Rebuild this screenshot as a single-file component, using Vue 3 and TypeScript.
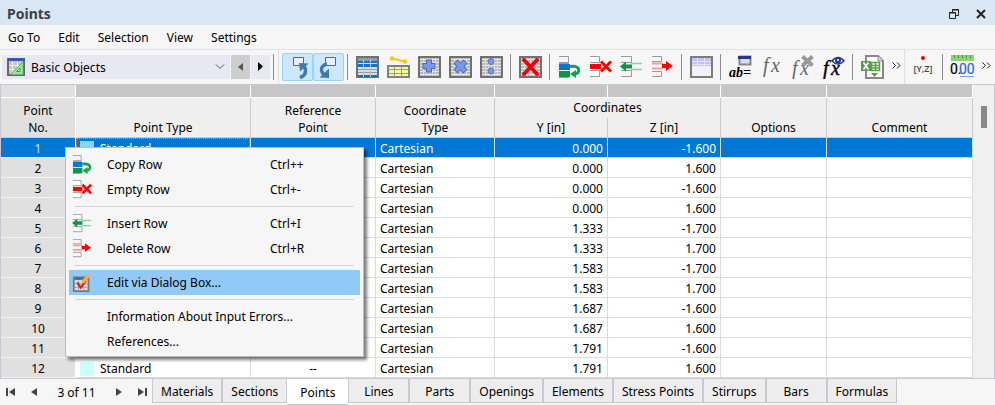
<script setup lang="ts">
import { ref } from 'vue'

interface Tool { icon: string; label: string; on?: boolean }
interface MenuEntry { label: string; keys?: string; icon?: string; active?: boolean }
interface PointRow { no: number; y: string; z: string }

const menus = ['Go To', 'Edit', 'Selection', 'View', 'Settings']

const toolGroups: Tool[][] = [
  [{ icon: 'pick-up', label: 'Select in graphic', on: true }, { icon: 'pick-down', label: 'Show in table', on: true }],
  [
    { icon: 'rows', label: 'Row view' },
    { icon: 'member', label: 'Object view' },
    { icon: 'grid-plus', label: 'Add block' },
    { icon: 'grid-times', label: 'Multiply block' },
    { icon: 'grid-dots', label: 'Divide block' },
  ],
  [{ icon: 'grid-delete', label: 'Clear table' }],
  [
    { icon: 'copy-row', label: 'Copy row' },
    { icon: 'empty-row', label: 'Empty row' },
    { icon: 'insert-row', label: 'Insert row' },
    { icon: 'delete-row', label: 'Delete row' },
  ],
  [{ icon: 'table', label: 'Table settings' }],
  [
    { icon: 'param', label: 'Parameters' },
    { icon: 'fx', label: 'Formula' },
    { icon: 'fx-off', label: 'Remove formula' },
    { icon: 'fx-eye', label: 'Show formulas' },
  ],
  [{ icon: 'excel', label: 'Export' }],
]

const viewGroups: Tool[][] = [
  [{ icon: 'coords', label: 'Coordinates' }],
  [{ icon: 'decimals', label: 'Decimal places' }],
]

const contextMenu: MenuEntry[][] = [
  [{ label: 'Copy Row', keys: 'Ctrl++', icon: 'copy-row' }, { label: 'Empty Row', keys: 'Ctrl+-', icon: 'empty-row' }],
  [{ label: 'Insert Row', keys: 'Ctrl+I', icon: 'insert-row' }, { label: 'Delete Row', keys: 'Ctrl+R', icon: 'delete-row' }],
  [{ label: 'Edit via Dialog Box...', icon: 'dialog', active: true }],
  [{ label: 'Information About Input Errors...' }, { label: 'References...' }],
]

const ys = ['0.000', '1.333', '1.583', '1.687', '1.791']
const rows: PointRow[] = Array.from({ length: 12 }, (_, i) => {
  const y = i < 4 ? ys[0] : ys[Math.floor(i / 2) - 1]
  const depth = i >= 4 && i < 8 ? '1.700' : '1.600'
  return { no: i + 1, y, z: i % 2 === 0 ? '-' + depth : depth }
})

const tabs = ['Materials', 'Sections', 'Points', 'Lines', 'Parts', 'Openings', 'Elements', 'Stress Points', 'Stirrups', 'Bars', 'Formulas']
const activeTab = ref('Points')
const selectedRow = ref(1)
const category = ref('Basic Objects')
</script>

<template>
  <svg class="sprite" aria-hidden="true">
    <defs>
      <symbol id="pick-up" viewBox="0 0 29 26">
        <path d="M10.500 3.500h10v8h-10z" fill="#eee" stroke="#666" />
        <path d="M17 23.500c3-1 5.500-3 5.500-6.500 0-2-.5-3.500-1.500-5" fill="none" stroke="#4078b0" stroke-width="3.500" />
        <path d="M16 9l9.500.5-8.500 8z" fill="#4078b0" />
      </symbol>
      <symbol id="pick-down" viewBox="0 0 29 26">
        <path d="M11.500 3.500h10v8h-10z" fill="#eee" stroke="#666" />
        <path d="M13 10c-4.500 1-6 4-5.500 6.500.3 2 1.500 3.500 3 4.500" fill="none" stroke="#4078b0" stroke-width="3.500" />
        <path d="M15 14.500V24l-9.500-.5z" fill="#4078b0" />
      </symbol>
      <symbol id="grid" viewBox="0 0 23 22">
        <path d="M1 1h21v20H1z" fill="#b8b8b8" stroke="#707070" stroke-width="2" />
        <path d="M2 3.500h19M2 6.500h19M2 9.500h19M2 12.500h19M2 15.500h19M2 18.500h19" stroke="#e8e8e8" />
        <path d="M5.500 2v18M8.500 2v18M11.500 2v18M14.500 2v18M17.500 2v18" stroke="#ddd" />
      </symbol>
      <symbol id="rows" viewBox="0 0 23 22">
        <path d="M1 1h21v20H1z" fill="#ddd" stroke="#707070" stroke-width="2" />
        <path d="M2 2h19v3H2z" fill="#999" />
        <path d="M2 5h19v2H2zM2 8h19v3H2zM2 19h19v2H2z" fill="#1474c4" />
        <path d="M2 13.500h19M2 16.500h19" stroke="#999" />
        <path d="M7.500 3v18M14.500 3v18" stroke="#b8c4cc" />
      </symbol>
      <symbol id="member" viewBox="0 0 23 22">
        <path d="M5 2.500l13 3" stroke="#ffc800" stroke-width="2" />
        <circle cx="5" cy="2.500" r="2.200" fill="#ffc800" /><circle cx="18" cy="5.500" r="2.200" fill="#ffc800" />
        <path d="M1 10h21v11H1z" fill="#f7f79c" stroke="#808080" stroke-width="2" />
        <path d="M2 13.500h19M2 17.500h19M7.500 11v10M14.500 11v10" stroke="#999" />
      </symbol>
      <symbol id="grid-plus" viewBox="0 0 23 22">
        <use href="#grid" /><path d="M11 3.500v13M4.500 10h13" stroke="#5068b0" stroke-width="6" /><path d="M11 4.500v11M5.500 10h11" stroke="#7898f0" stroke-width="4" />
      </symbol>
      <symbol id="grid-times" viewBox="0 0 23 22">
        <use href="#grid" /><path d="M6.500 5.500l10 10M16.500 5.500l-10 10" stroke="#5068b0" stroke-width="6" /><path d="M7.200 6.200l8.600 8.600M15.800 6.200l-8.600 8.600" stroke="#7898f0" stroke-width="4" />
      </symbol>
      <symbol id="grid-dots" viewBox="0 0 23 22">
        <use href="#grid" /><g fill="#7898f0" stroke="#5873c8"><circle cx="11" cy="5.500" r="3" /><circle cx="11" cy="15" r="3" /></g>
      </symbol>
      <symbol id="grid-delete" viewBox="0 0 23 22">
        <use href="#grid" /><path d="M5 4l13 14M18 4L5 18" stroke="#f00000" stroke-width="4" stroke-linecap="round" />
      </symbol>
      <symbol id="copy-row" viewBox="0 0 23 22">
        <path d="M1 .500h9.500v6H1M1 21.500h9.500" fill="none" stroke="#999" />
        <path d="M1 8h11v6H1z" fill="#0078d4" /><path d="M1 7.500h10" stroke="#999" /><path d="M1 15h11v6H1z" fill="#0a9848" />
        <path d="M12 10.500c11-1.500 11 7.500 4 7.500" fill="none" stroke="#18a050" stroke-width="3" /><path d="M12 18l6-4v8z" fill="#18a050" />
      </symbol>
      <symbol id="empty-row" viewBox="0 0 23 22">
        <path d="M1 .500h9.500v6H1M1 14.500h9.500v6H1" fill="#fff" stroke="#999" />
        <path d="M1 8h11v5H1z" fill="#f00" /><path d="M12 5.500l10 10M22 5.500l-10 10" stroke="#f00" stroke-width="3" />
      </symbol>
      <symbol id="insert-row" viewBox="0 0 23 22">
        <path d="M1 .500h10.500v6H1M1 14.500h10.500v6H1" fill="none" stroke="#999" />
        <path d="M11 7.500h11M11 13.500h11" stroke="#88d0a8" stroke-width="1.500" /><path d="M0 10.500L6 5.500v3h6v4H6v3z" fill="#0a9848" />
      </symbol>
      <symbol id="delete-row" viewBox="0 0 23 22">
        <path d="M1 .500h9.500v5H1M1 15.500h9.500v5H1" fill="none" stroke="#999" />
        <path d="M1 7.500h11M1 12.500h11" stroke="#ff9a9a" stroke-width="2" /><path d="M22 10l-7-5v3h-4v4h4v3z" fill="#f00" />
      </symbol>
      <symbol id="table" viewBox="0 0 23 22">
        <path d="M1 1h21v20H1z" fill="#f2f2f5" stroke="#7c7c7c" stroke-width="2" />
        <path d="M2 2h19v8H2z" fill="#c4c4f4" /><path d="M2 5.500h19M2 8.500h19M7.500 2v8M14.500 2v8" stroke="#e4e4fa" />
      </symbol>
      <symbol id="param" viewBox="0 0 25 24">
        <path d="M11.500 1.500h11v8h-11z" fill="#ddd" stroke="#888" stroke-width="2" /><path d="M10 1h13v3H10z" fill="#203890" />
        <text x="1" y="22" font-family="Liberation Serif, serif" font-size="14" font-weight="700" font-style="italic">ab=</text>
      </symbol>
      <symbol id="fx" viewBox="0 0 25 24">
        <text x="4" y="17" font-family="Liberation Serif, serif" font-size="20" font-style="italic" fill="#666">f</text>
        <text x="12" y="17" font-family="Liberation Serif, serif" font-size="20" font-style="italic" fill="#666">x</text>
      </symbol>
      <symbol id="fx-off" viewBox="0 0 25 24">
        <text x="2" y="20" font-family="Liberation Serif, serif" font-size="20" font-style="italic" fill="#666">f</text>
        <text x="10" y="20" font-family="Liberation Serif, serif" font-size="20" font-style="italic" fill="#666">x</text>
        <path d="M12.500 1.500l10 9M22.500 1.500l-10 9" stroke="#999" stroke-width="4" />
      </symbol>
      <symbol id="fx-eye" viewBox="0 0 25 24">
        <text x="2" y="20" font-family="Liberation Serif, serif" font-size="20" font-style="italic" stroke="#000" stroke-width=".4">f</text>
        <text x="10" y="20" font-family="Liberation Serif, serif" font-size="20" font-style="italic" stroke="#000" stroke-width=".4">x</text>
        <path d="M11 6q6-7 12 0-6 6-12 0z" fill="#fff" stroke="#203890" stroke-width="1.500" /><circle cx="17" cy="5.500" r="3" fill="#203890" /><circle cx="17" cy="5" r="1" fill="#fff" />
      </symbol>
      <symbol id="excel" viewBox="0 0 23 24">
        <path d="M5 1h12l5 5v17H5z" fill="#fff" stroke="#888" stroke-width="2" /><path d="M17 1v5h5" fill="#ddd" stroke="#888" />
        <path d="M0 6h10v10H0z" fill="#58a048" /><path d="M2.500 7.500l5 7M7.500 7.500l-5 7" stroke="#fff" stroke-width="1.500" />
        <path d="M10.500 7.500h8v8h-8zM14.500 7v8M10 10.500h8M10 13h8" fill="none" stroke="#58a048" stroke-width="1.500" /><path d="M10 18h7l-3.500 4z" fill="#58a048" />
      </symbol>
      <symbol id="coords" viewBox="0 0 25 24">
        <circle cx="12" cy="3" r="2" fill="#e80000" /><text x="12" y="17" text-anchor="middle" font-family="Open Sans, sans-serif" font-size="9" font-weight="600" fill="#444">[Y,Z]</text>
      </symbol>
      <symbol id="decimals" viewBox="0 0 25 24">
        <path d="M1 0h23v6H1z" fill="#86d66c" /><path d="M4.500 0v3M8.500 0v3M12.500 0v3M16.500 0v3M20.500 0v3" stroke="#48983c" />
        <g font-family="Roboto, sans-serif" font-size="14" stroke-width=".2"><text x="0" y="19" stroke="#000">0.</text><text x="9" y="19" fill="#2868d8" stroke="#2868d8">00</text></g><path d="M10 21.500h14" stroke="#78a0f0" />
      </symbol>
      <symbol id="dialog" viewBox="0 0 23 22">
        <path d="M2 5h17v16H2z" fill="#ddd" stroke="#777" stroke-width="2" /><path d="M3 5h15v3H3z" fill="#4868a8" />
        <path d="M3 12.500h15M3 16.500h15M7.500 9v11M13.500 9v11" stroke="#999" />
        <path d="M6 11l4 6 6-8" fill="none" stroke="#d82020" stroke-width="2.500" /><path d="M12 11l7-8" stroke="#f0b030" stroke-width="4" /><path d="M18.500 3.500l2-2" stroke="#e8a8b8" stroke-width="4" />
      </symbol>
    </defs>
  </svg>

  <main class="panel">
    <header class="title">
      <h1>Points</h1>
      <button aria-label="Restore"><svg width="12" height="12" viewBox="0 0 12 12"><path d="M4.500 4V1.500h6v6H8M4 2h7M1.500 4.500h6v6h-6zM1 5h7" fill="none" stroke="#222" /></svg></button>
      <button aria-label="Close"><svg width="12" height="12" viewBox="0 0 12 12"><path d="M2 2l8 8M10 2l-8 8" stroke="#222" stroke-width="2" /></svg></button>
    </header>

    <nav class="menubar"><button v-for="m in menus" :key="m">{{ m }}</button></nav>

    <div class="toolbar">
      <div class="category">
        <svg width="18" height="18" viewBox="0 0 18 18" aria-hidden="true">
          <path d="M1 1h16v16H1z" fill="#c4c8c4" stroke="#666" stroke-width="2" /><path d="M1 0h17v3H1z" fill="#3858a8" />
          <path d="M2 7.500h14M2 11.500h14M5.500 4v12M10.500 4v12" stroke="#eee" /><path d="M16 4v12.500H3.500z" fill="#98e898" stroke="#60b868" /><path d="M13 10v3.500H9.500z" fill="#fff" stroke="#30a040" />
        </svg>
        <select v-model="category" aria-label="Table category"><option>Basic Objects</option></select>
        <svg width="10" height="6" viewBox="0 0 10 6" aria-hidden="true"><path d="M1 .5l4 4 4-4" fill="none" stroke="#555" /></svg>
      </div>
      <button class="step off" aria-label="Previous table"><svg width="6" height="10" viewBox="0 0 6 10"><path d="M5 1v8L0 5z" fill="#555" /></svg></button>
      <button class="step" aria-label="Next table"><svg width="6" height="10" viewBox="0 0 6 10"><path d="M0 0v9l5-4.500z" /></svg></button>
      <i class="sep" />
      <div class="strip">
        <template v-for="(group, g) in toolGroups" :key="g">
          <i v-if="g" class="sep" />
          <button v-for="t in group" :key="t.icon" class="tool" :class="{ on: t.on }" :aria-label="t.label">
            <svg :class="t.icon"><use :href="'#' + t.icon" /></svg>
          </button>
        </template>
        <button class="more" aria-label="More tools"><svg width="9" height="7" viewBox="0 0 9 7"><path d="M.5 .5l3 3-3 3M5 .5l3 3-3 3" fill="none" stroke="#222" /></svg></button>
      </div>
      <div class="strip">
        <template v-for="(group, g) in viewGroups" :key="g">
          <i v-if="g" class="sep" />
          <button v-for="t in group" :key="t.icon" class="tool" :aria-label="t.label"><svg :class="t.icon"><use :href="'#' + t.icon" /></svg></button>
        </template>
        <button class="more" aria-label="More view tools"><svg width="9" height="7" viewBox="0 0 9 7"><path d="M.5 .5l3 3-3 3M5 .5l3 3-3 3" fill="none" stroke="#222" /></svg></button>
      </div>
    </div>

    <section class="sheet">
      <table>
        <colgroup><col class="c-no"><col class="c-type"><col class="c-ref"><col class="c-coord"><col class="c-num"><col class="c-num"><col class="c-opt"><col></colgroup>
        <thead>
          <tr class="band"><td v-for="n in 8" :key="n" /></tr>
          <tr class="head">
            <th rowspan="2" class="corner">Point<br>No.</th><th rowspan="2">Point Type</th><th rowspan="2">Reference<br>Point</th><th rowspan="2">Coordinate<br>Type</th>
            <th colspan="2" class="span">Coordinates</th><th rowspan="2">Options</th><th rowspan="2">Comment</th>
          </tr>
          <tr class="head"><th>Y [in]</th><th>Z [in]</th></tr>
        </thead>
        <tbody>
          <tr v-for="r in rows" :key="r.no" :class="{ selected: r.no === selectedRow }" @click="selectedRow = r.no">
            <th scope="row">{{ r.no }}</th>
            <td class="type"><div><i class="swatch" />Standard</div></td>
            <td class="mid">--</td><td>Cartesian</td><td class="num">{{ r.y }}</td><td class="num">{{ r.z }}</td><td /><td />
          </tr>
        </tbody>
      </table>
      <div class="scroll"><i /></div>
    </section>

    <footer class="bottom">
      <div class="pager">
        <button aria-label="First"><svg width="10" height="10" viewBox="0 0 10 10"><path d="M0 1h2v8H0zM9 1v8L3 5z" /></svg></button>
        <button aria-label="Previous"><svg width="10" height="10" viewBox="0 0 10 10"><path d="M8 1v8L2 5z" /></svg></button>
        <span>3 of 11</span>
        <button aria-label="Next"><svg width="10" height="10" viewBox="0 0 10 10"><path d="M2 1v8l6-4z" /></svg></button>
        <button aria-label="Last"><svg width="10" height="10" viewBox="0 0 10 10"><path d="M8 1h2v8H8zM1 1v8l6-4z" /></svg></button>
      </div>
      <div class="tabs" role="tablist">
        <button v-for="t in tabs" :key="t" role="tab" :aria-selected="t === activeTab" :class="{ current: t === activeTab }" @click="activeTab = t">{{ t }}</button>
      </div>
    </footer>

    <div class="context" role="menu">
      <div v-for="(group, g) in contextMenu" :key="g" class="group">
        <button v-for="e in group" :key="e.label" role="menuitem" :class="{ active: e.active }">
          <span class="slot"><svg v-if="e.icon"><use :href="'#' + e.icon" /></svg></span>
          <span class="label">{{ e.label }}</span>
          <kbd v-if="e.keys">{{ e.keys }}</kbd>
        </button>
      </div>
    </div>
  </main>
</template>

<style>
body { background: #f6f6f7; }
</style>

<style scoped>
.sprite { position: absolute; width: 0; height: 0; }
.panel { position: relative; font: 12px/17px "Noto Sans", "Open Sans", sans-serif; color: #000; background: #f6f6f7; overflow: hidden; }
.panel *, .panel { box-sizing: border-box; }
button, select, kbd { font: inherit; color: inherit; border: 0; background: none; padding: 0; margin: 0; }
button svg { display: block; }

.title { display: flex; align-items: center; gap: 15px; height: 25px; padding: 2px 8px 0 7px; background: #d9e7f5; }
h1 { flex: 1; margin: 0; font-size: 14px; line-height: 20px; font-weight: 700; color: #404040; }
.menubar { display: flex; gap: 18px; height: 25px; padding: 4px 8px; border-bottom: 1px solid #e2e2e6; }

.toolbar { display: flex; align-items: center; height: 34px; padding-left: 2px; }
.category { display: flex; align-items: center; width: 228px; height: 24px; padding: 0 5px; gap: 6px; background: #e8e8f3; }
.category select { flex: 1; appearance: none; outline: 0; }
.step { display: grid; place-items: center; width: 19px; height: 24px; margin-left: 1px; background: #e8e8f3; }
.step.off { background: #cecece; }
.sep { flex: none; width: 8px; height: 26px; background: linear-gradient(#8c8c8c, #8c8c8c) 3px 0 / 1px 100% no-repeat; }
.strip { display: flex; align-items: center; flex: none; height: 34px; padding-left: 3px; border-left: 1px solid #dfdfe3; }
.tool { display: grid; place-items: center; width: 31px; height: 28px; }
.tool svg { width: 23px; height: 22px; }
.tool svg.param, .tool svg.fx, .tool svg.fx-off, .tool svg.fx-eye, .tool svg.coords, .tool svg.decimals { width: 25px; height: 24px; }
.tool svg.excel { height: 24px; }
.tool.on { background: #cce8ff; border: 1px solid #99d1ff; border-radius: 2px; }
.tool.on svg { width: 29px; height: 26px; }
.more { display: grid; place-items: center; width: 16px; height: 34px; padding-bottom: 4px; }

.sheet { display: flex; border: 1px solid #c8c8d4; background: #f0f0f0; }
table { flex: 1; width: 0; table-layout: fixed; border-collapse: separate; border-spacing: 0; background: #fff; }
.c-no { width: 75px; } .c-type { width: 175px; } .c-ref { width: 125px; } .c-coord { width: 119px; } .c-num { width: 113px; } .c-opt { width: 106px; }
td, th { height: 20px; padding: 2px 4px 0; line-height: 17px; border-right: 1px solid #dcdcdc; border-bottom: 1px solid #dcdcdc; font-weight: 400; white-space: nowrap; overflow: hidden; }
.band td { height: 13px; padding: 0; background: #c6c6c6; border-color: #fff; }
.band td:first-child { background: #e0e0e0; }
.head th { padding: 0 4px 1px; vertical-align: bottom; background: #efefef; border-color: #cacaca; }
.head .span { padding-top: 1px; vertical-align: top; border-bottom: 0; }
.head .corner, tbody th { background: #e0e0e0; border-right-color: #fff; }
tbody th { border-bottom-color: #f4f4f4; }
.type { padding: 0; }
.type div { display: flex; align-items: center; gap: 6px; height: 19px; padding: 2px 0 0 4px; }
.swatch { width: 14px; height: 14px; background: #ccffff; }
.mid { text-align: center; }
.num { text-align: right; }
.selected td, .selected th { background: #0078d7; color: #fff; }
.selected th { color: #cde6fa; }
.selected .type div { border: 1px dotted #ff8c28; padding: 1px 0 0 3px; }
.selected .swatch { background: #8cd4f4; }
.scroll { width: 21px; padding: 21px 0 0 8px; }
.scroll i { display: block; width: 6px; height: 22px; background: #888; }

.bottom { display: flex; height: 26px; }
.pager { display: flex; align-items: center; width: 152px; padding: 0 5px 0 6px; justify-content: space-between; }
.pager svg { fill: #444; }
.pager span { padding: 0 6px; }
.tabs { display: flex; align-items: flex-start; }
.tabs button { height: 24px; min-width: 61px; padding: 1px 8px 0; background: #ededed; border: 1px solid #c8c8d4; border-top: 0; white-space: nowrap; }
.tabs .current { height: 26px; background: #fff; border-left-color: #fff; border-right-color: #fff; }

.context { position: absolute; left: 65px; top: 147px; width: 299px; padding: 4px 3px 2px; background: #f6f6f6; border: 1px solid #bcbcbc; box-shadow: 3px 3px 3px rgba(0, 0, 0, .5); }
.group + .group { margin-top: 4px; padding-top: 5px; background: linear-gradient(#d4d4d4, #d4d4d4) 6px 0 / calc(100% - 12px) 1px no-repeat; }
.group button { display: flex; align-items: center; width: 100%; height: 25px; text-align: left; }
.group .active { background: #91c9f7; }
.slot { width: 38px; padding-left: 3px; }
.slot svg { display: block; width: 20px; height: 19px; }
.label { flex: 1; }
kbd { width: 90px; }
</style>
